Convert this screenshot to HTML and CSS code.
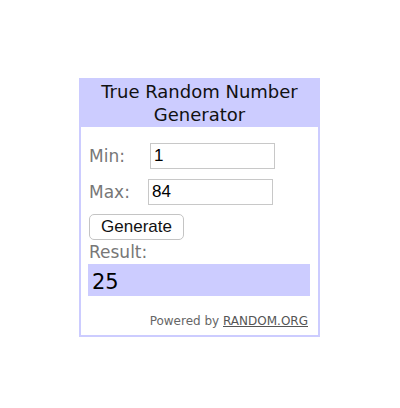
FILE: index.html
```html
<!DOCTYPE html>
<html>

<head>
    <meta charset="UTF-8">
    <title>True Random Number Generator</title>
    <link rel="stylesheet" href="styles.css">
</head>

<body>
    <div class="widget">
        <div class="widget-title">True Random Number Generator</div>
        <div class="widget-body">
            <div class="field">
                <span class="label label-min">Min:</span>
                <input class="num-input" type="text" value="1">
            </div>
            <div class="field">
                <span class="label label-max">Max:</span>
                <input class="num-input" type="text" value="84">
            </div>
            <button class="generate-btn">Generate</button>
            <div class="label result-label">Result:</div>
            <div class="result">25</div>
            <div class="powered">Powered by <a href="#">RANDOM.ORG</a></div>
        </div>
    </div>
</body>

</html>
```

FILE: styles.css
```css
body {
    margin: 0;
    background: #ffffff;
    font-family: "DejaVu Sans", Verdana, sans-serif;
}

.widget {
    width: 237px;
    margin: 78px 0 0 79px;
    border: 2px solid #ccccff;
    background: #ffffff;
}

.widget-title {
    background: #ccccff;
    color: #111111;
    text-align: center;
    font-size: 18px;
    line-height: 23px;
    padding: 0 4px 1px;
}

.widget-body {
    padding: 16px 8px 7px 8px;
}

.field {
    display: flex;
    align-items: center;
    margin-bottom: 10px;
}

.field + .field {
    margin-bottom: 9px;
}

.label {
    color: #777777;
    font-size: 17px;
}

.label-min {
    width: 61px;
}

.label-max {
    width: 59px;
}

.num-input {
    width: 117px;
    height: 24px;
    padding: 0 3px;
    border: 1px solid #c8c8c8;
    font-family: "Liberation Sans", Arial, sans-serif;
    font-size: 17px;
    color: #000000;
    outline: none;
}

.generate-btn {
    display: block;
    width: 95px;
    height: 26px;
    background: #ffffff;
    border: 1px solid #c4c4c4;
    border-radius: 5px;
    font-family: "Liberation Sans", Arial, sans-serif;
    font-size: 17px;
    color: #111111;
    padding: 0;
}

.result-label {
    margin-top: 1px;
    line-height: 22px;
}

.result {
    background: #ccccff;
    height: 32px;
    width: 218px;
    margin-top: 1px;
    margin-left: -1px;
    padding-left: 4px;
    font-size: 21px;
    line-height: 36px;
    color: #000000;
}

.powered {
    text-align: right;
    margin-top: 18px;
    margin-right: 2px;
    color: #666666;
    font-size: 12px;
}

.powered a {
    color: #555555;
}
```
